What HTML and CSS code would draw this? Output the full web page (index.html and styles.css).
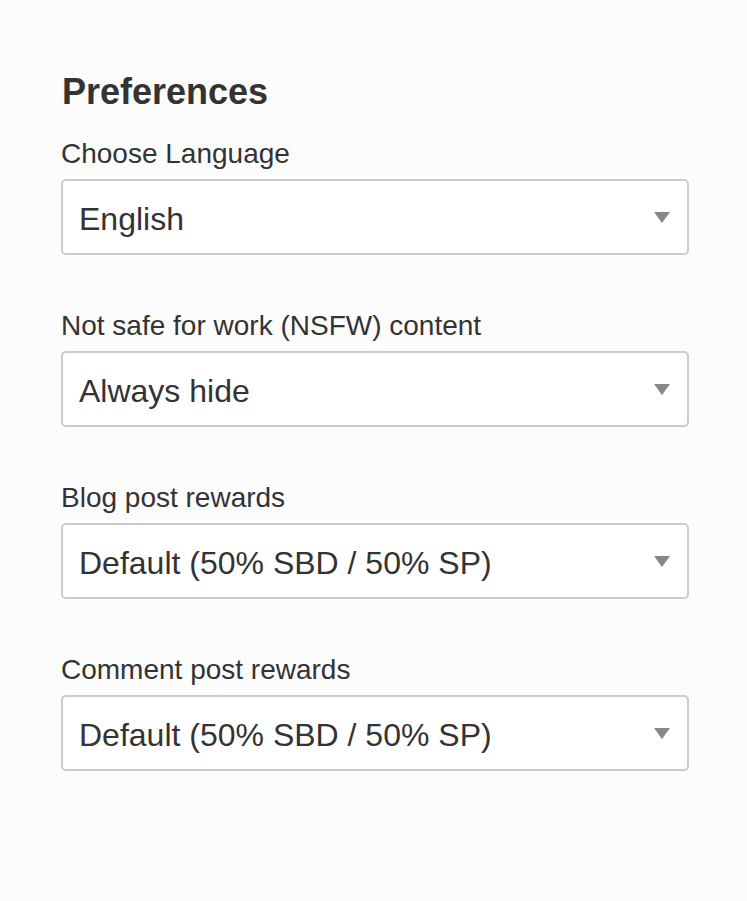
FILE: index.html
```html
<!DOCTYPE html>
<html lang="en">
<head>
<meta charset="utf-8">
<title>Preferences</title>
<link rel="stylesheet" href="styles.css">
</head>
<body>
<main class="prefs">
  <h3 class="prefs-title">Preferences</h3>

  <div class="field">
    <label class="field-label">Choose Language</label>
    <div class="select">
      <span class="select-value">English</span>
      <svg class="select-arrow" width="16" height="11" viewBox="0 0 16 11"><polygon points="0,0 16,0 8,11" fill="#888"/></svg>
    </div>
  </div>

  <div class="field">
    <label class="field-label">Not safe for work (NSFW) content</label>
    <div class="select">
      <span class="select-value">Always hide</span>
      <svg class="select-arrow" width="16" height="11" viewBox="0 0 16 11"><polygon points="0,0 16,0 8,11" fill="#888"/></svg>
    </div>
  </div>

  <div class="field">
    <label class="field-label">Blog post rewards</label>
    <div class="select">
      <span class="select-value">Default (50% SBD / 50% SP)</span>
      <svg class="select-arrow" width="16" height="11" viewBox="0 0 16 11"><polygon points="0,0 16,0 8,11" fill="#888"/></svg>
    </div>
  </div>

  <div class="field">
    <label class="field-label">Comment post rewards</label>
    <div class="select">
      <span class="select-value">Default (50% SBD / 50% SP)</span>
      <svg class="select-arrow" width="16" height="11" viewBox="0 0 16 11"><polygon points="0,0 16,0 8,11" fill="#888"/></svg>
    </div>
  </div>
</main>
</body>
</html>
```

FILE: styles.css
```css
html, body {
  margin: 0;
  padding: 0;
  background: #fcfcfc;
}

body {
  font-family: "Liberation Sans", Arial, Helvetica, sans-serif;
  color: #333333;
}

.prefs {
  width: 628px;
  margin-left: 61px;
  padding-top: 71px;
  display: flex;
  flex-direction: column;
}

.prefs-title {
  margin: 0 0 24px 1px;
  font-size: 36px;
  line-height: 42px;
  font-weight: bold;
  color: #333333;
}

.field {
  display: flex;
  flex-direction: column;
  margin-bottom: 54px;
}

.field-label {
  display: block;
  font-size: 28px;
  line-height: 34px;
  margin: 0 0 8px 0;
}

.select {
  box-sizing: border-box;
  height: 76px;
  border: 2px solid #cbcbcb;
  border-radius: 5px;
  background: #ffffff;
  display: flex;
  align-items: center;
  justify-content: space-between;
  padding: 0 17px 0 16px;
}

.select-value {
  font-size: 32px;
  line-height: 38px;
  margin-top: 4px;
  color: #333333;
}

.select-arrow {
  display: block;
  margin-top: 1px;
}
```
